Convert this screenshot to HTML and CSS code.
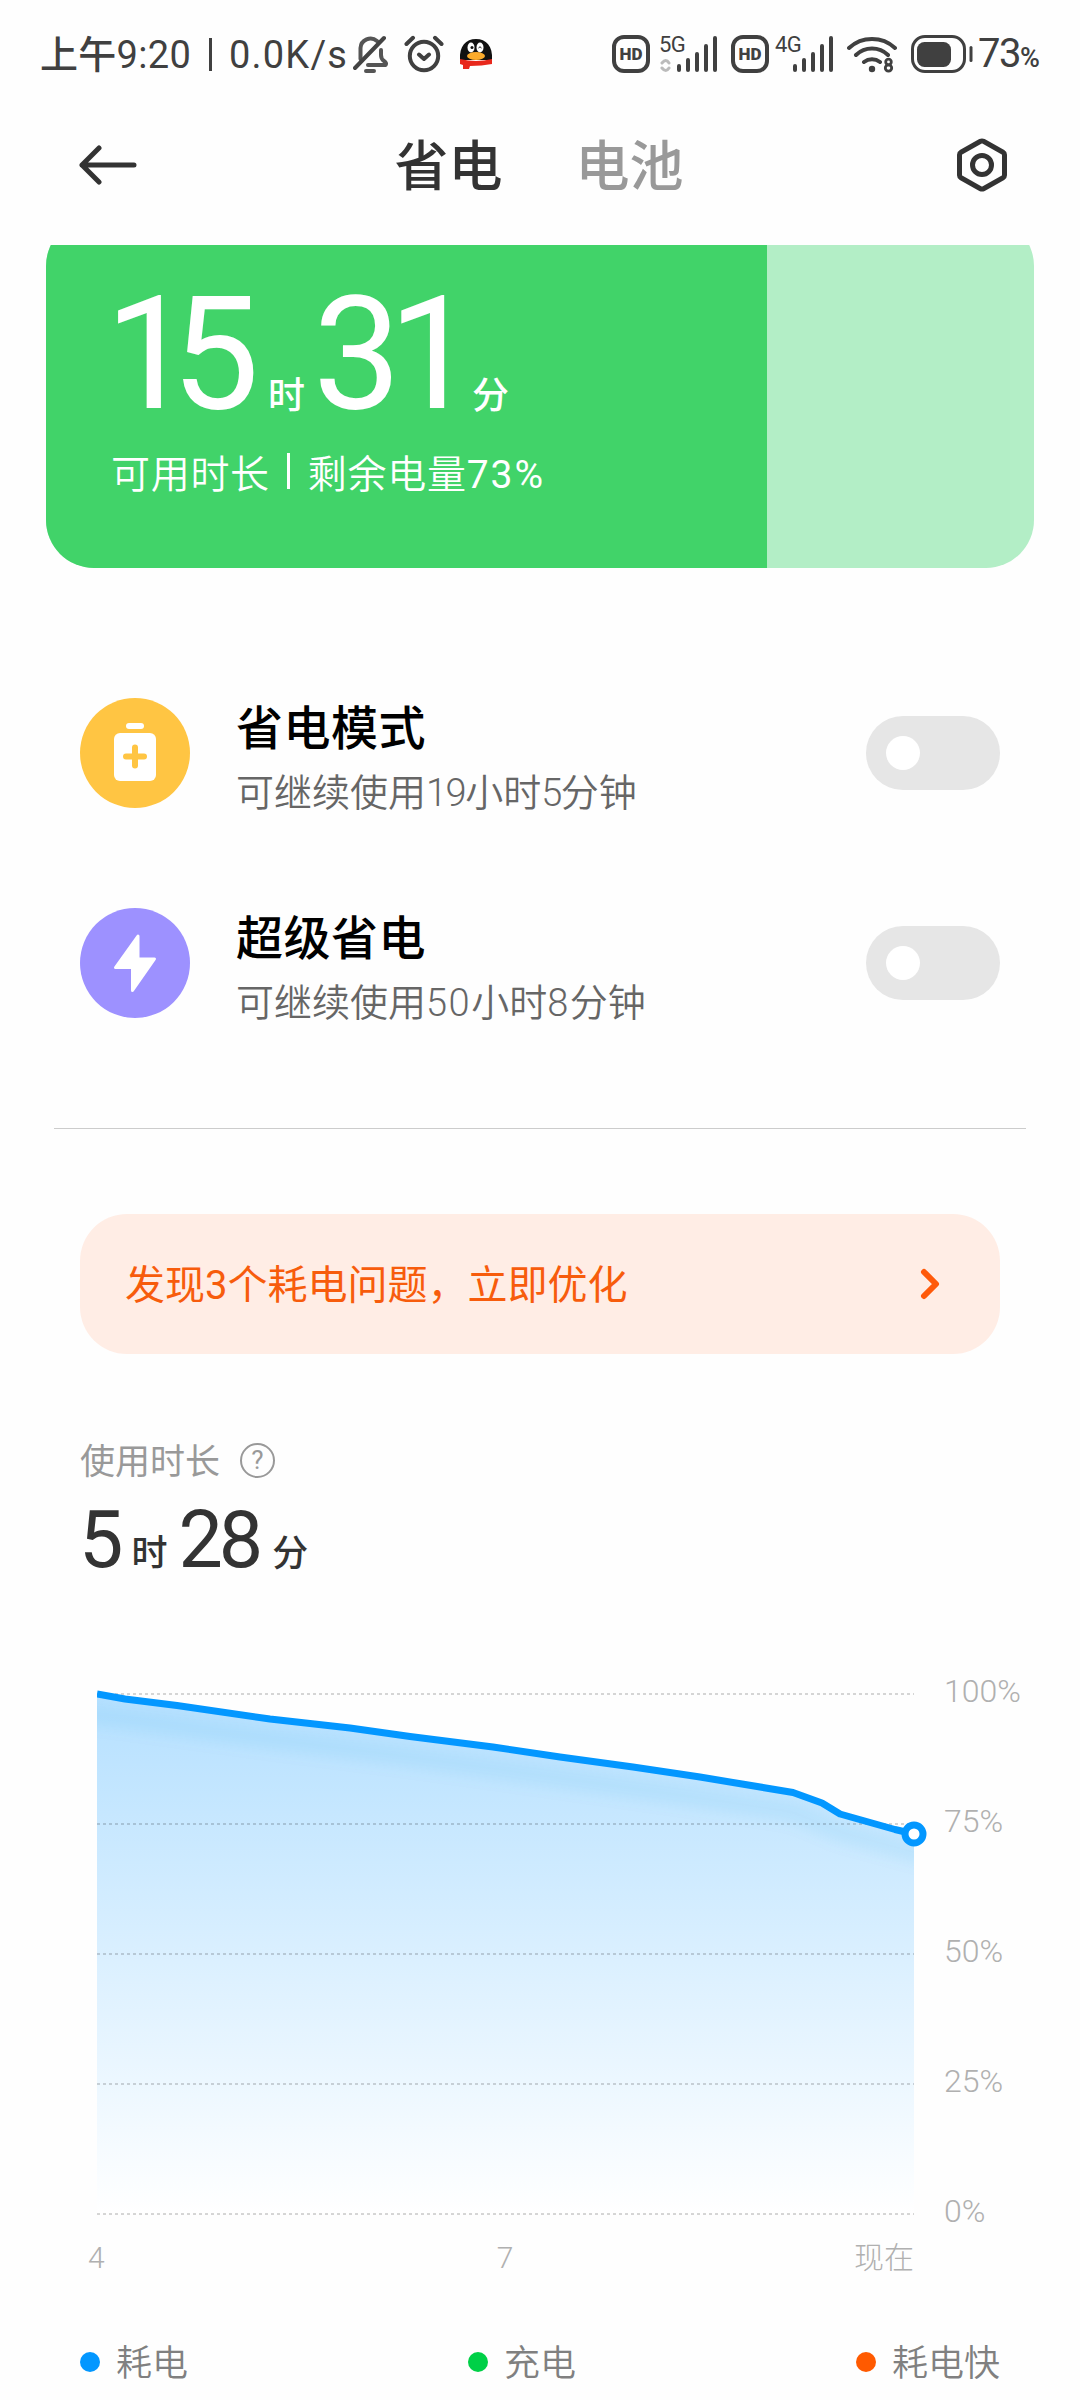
FILE: index.html
```html
<!DOCTYPE html>
<html lang="zh-CN">
<head>
<meta charset="utf-8">
<title>省电与电池</title>
<link rel="stylesheet" href="styles.css">
</head>
<body>
<div class="screen">
  <div class="status">
    <div class="status-left">
      <span class="clock">上午9:20</span><span class="sep"></span><span class="speed">0.0K/s</span>
      <svg class="ico-bell" width="36" height="38" viewBox="0 0 36 38" fill="none" stroke="#555" stroke-width="4" stroke-linecap="round" stroke-linejoin="round">
        <path d="M7.500 24V13a10 10 0 0 1 16.500-7M28 15v5q0 4 3 6t1.500 4H15M13 36h8"/><path d="M2 33 31 3" stroke="#444"/>
      </svg>
      <svg class="ico-alarm" width="40" height="38" viewBox="0 0 40 38" fill="none" stroke="#404040" stroke-width="4" stroke-linecap="round" stroke-linejoin="round">
        <circle cx="20" cy="21" r="14.2"/><path d="M2.500 9 9 2.800M37.500 9 31 2.800M15 19.500l5 4.500 5-4.500"/>
      </svg>
      <svg class="ico-qq" width="34" height="32" viewBox="0 0 34 32">
        <path d="M1 22C0 8 7 1 17 1s17 7 16 21z" fill="#111"/>
        <ellipse cx="12" cy="9.500" rx="3.500" ry="5" fill="#fff"/><ellipse cx="21" cy="9.500" rx="3.500" ry="5" fill="#fff"/>
        <circle cx="13" cy="9.500" r="1.500" fill="#111"/><path d="M19.500 10q1.500-2.500 3 0" stroke="#111" fill="none"/>
        <ellipse cx="17" cy="18" rx="9" ry="4" fill="#fbab2c"/>
        <path d="M1 21q16 4 32 0v5q-10 2-22 2l-1 3H4v-4l-3-1z" fill="#e8281c"/>
      </svg>
    </div>
    <div class="status-right">
      <div class="hd">HD</div>
      <div class="net net-a"><span>5G</span>
        <svg width="57" height="38" viewBox="0 0 57 38" fill="none" stroke="#404040" stroke-width="4" stroke-linecap="round"><path d="M2 28q4-5 7 0M2 33q4 5 7 0" stroke="#bbb" stroke-width="3"/><path d="M19 31v4M28 25v10M37 19v16M46 11v24M55 3v32"/></svg></div>
      <div class="hd">HD</div>
      <div class="net net-b"><span>4G</span>
        <svg width="57" height="38" viewBox="0 0 57 38" fill="none" stroke="#404040" stroke-width="4" stroke-linecap="round"><path d="M19 31v4M28 25v10M37 19v16M46 11v24M55 3v32"/></svg></div>
      <svg class="ico-wifi" width="50" height="38" viewBox="0 0 50 38" fill="none" stroke="#404040" stroke-width="4" stroke-linecap="round">
        <path d="M2 13a34 34 0 0 1 46 0M9 20a23 23 0 0 1 32 0M17 27a13 13 0 0 1 16 0"/><circle cx="25" cy="34" r="3.200" fill="#404040" stroke="none"/>
        <g stroke-width="2.800"><circle cx="41.500" cy="27" r="2.800"/><circle cx="41.500" cy="33" r="3.200"/></g>
      </svg>
      <svg class="ico-batt" width="62" height="38" viewBox="0 0 62 38" fill="none" stroke="#404040"><rect x="1.500" y="1.500" width="52" height="35" rx="12.500" stroke-width="3"/><rect x="6" y="7" width="34" height="25" rx="7.500" fill="#404040" stroke="none"/><path d="M60 12.500v13" stroke-width="3" stroke-linecap="round"/></svg>
      <span class="pct">73<small>%</small></span>
    </div>
  </div>

  <div class="header">
    <svg width="58" height="40" viewBox="0 0 58 40" fill="none" stroke="#333" stroke-width="5" stroke-linecap="round" stroke-linejoin="round"><path d="M20 3 3 20l17 17M3 20h52"/></svg>
    <div class="tabs"><span class="tab on">省电</span><span class="tab">电池</span></div>
    <svg width="50" height="54" viewBox="0 0 50 54" fill="none" stroke="#333" stroke-width="5" stroke-linejoin="round"><path d="M23.500 3.300q1.500-.8 3 0L46 14.200q1.500.8 1.500 2.500v20.600q0 1.700-1.500 2.500L26.500 50.700q-1.500.8-3 0L4 39.800q-1.500-.8-1.500-2.500V16.700q0-1.700 1.500-2.500z"/><circle cx="25" cy="27" r="9.500"/></svg>
  </div>

  <div class="hero-clip">
    <div class="hero">
      <div class="hero-fill">
        <div class="time"><b class="hours">15</b><i class="u1">时</i><b class="minutes">31</b><i class="u2">分</i></div>
        <div class="hero-sub"><span>可用时长</span><em></em><span>剩余电量<s>73%</s></span></div>
      </div>
    </div>
  </div>

  <div class="modes">
    <div class="mode">
      <svg width="110" height="110" viewBox="0 0 110 110"><circle cx="55" cy="55" r="55" fill="#ffc543"/><rect x="46" y="25" width="18" height="6" rx="3" fill="#fff"/><rect x="34" y="35" width="42" height="48" rx="6" fill="#fff"/><path d="M55 49.500v18M46 58.500h18" stroke="#ffc543" stroke-width="6" stroke-linecap="round"/></svg>
      <div class="mode-text"><div class="mode-title">省电模式</div><div class="mode-sub">可继续使用<s>19</s>小时<s>5</s>分钟</div></div>
      <div class="switch"></div>
    </div>
    <div class="mode">
      <svg width="110" height="110" viewBox="0 0 110 110"><circle cx="55" cy="55" r="55" fill="#9d91ff"/><path d="M58 28 35.500 59.500H52.500V82.500L74.500 51H58z" fill="#fff" stroke="#fff" stroke-width="3" stroke-linejoin="round"/></svg>
      <div class="mode-text"><div class="mode-title">超级省电</div><div class="mode-sub wide">可继续使用<s>50</s>小时<s>8</s>分钟</div></div>
      <div class="switch"></div>
    </div>
  </div>

  <div class="rule"></div>

  <div class="notice">
    <span>发现<s>3</s>个耗电问题，立即优化</span>
    <svg width="20" height="32" viewBox="0 0 20 32" fill="none" stroke="#ff5a0a" stroke-width="6" stroke-linecap="round" stroke-linejoin="round"><path d="M4 4l12 12L4 28"/></svg>
  </div>

  <div class="usage-label"><span>使用时长</span><div class="help">?</div></div>
  <div class="usage"><b>5</b><i class="u3">时</i><b>28</b><i class="u4">分</i></div>

  <div class="chart">
    <svg class="plot" width="830" height="560" viewBox="97 1680 830 560">
      <defs>
        <linearGradient id="area" x1="0" y1="1694" x2="0" y2="2214" gradientUnits="userSpaceOnUse"><stop offset="0" stop-color="#b5e0ff"/><stop offset="1" stop-color="#fff"/></linearGradient>
        <clipPath id="under"><path d="M97 1694 125 1699 177 1705.500 270 1719 350 1728 410 1736.500 493 1747 560 1757 633 1767 700 1777 793 1792.500 822 1803 840 1814 895 1829.500 914 1834V2214H97z"/></clipPath>
        <filter id="soft" x="-10%" y="-50%" width="120%" height="200%"><feGaussianBlur stdDeviation="7"/></filter>
      </defs>
      <g clip-path="url(#under)">
        <rect x="97" y="1690" width="817" height="524" fill="url(#area)"/>
        <path d="M60 1711 125 1719 270 1739 410 1757 560 1778 700 1798 793 1812 840 1832 950 1862" fill="none" stroke="#0a8fd8" stroke-opacity=".075" stroke-width="20" filter="url(#soft)"/>
      </g>
      <path d="M97 1694H914M97 1824H914M97 1954H914M97 2084H914M97 2214H914" stroke="#000" stroke-opacity=".16" stroke-width="2" stroke-dasharray="3 3"/>
      <path d="M97 1694 125 1699 177 1705.500 270 1719 350 1728 410 1736.500 493 1747 560 1757 633 1767 700 1777 793 1792.500 822 1803 840 1814 895 1829.500 914 1834" fill="none" stroke="#0397ff" stroke-width="7" stroke-linejoin="round"/>
      <circle cx="914" cy="1834" r="9" fill="#fff" stroke="#0397ff" stroke-width="7"/>
    </svg>
    <div class="yaxis"><span>100%</span><span>75%</span><span>50%</span><span>25%</span><span>0%</span></div>
  </div>
  <div class="xaxis"><span>4</span><span>7</span><span>现在</span></div>

  <div class="legend">
    <div><i class="dot blue"></i>耗电</div><div><i class="dot green"></i>充电</div><div><i class="dot orange"></i>耗电快</div>
  </div>
</div>
</body>
</html>
```
FILE: styles.css
```css
* { box-sizing: border-box; }
body { margin: 0; background: #fefefe; font-family: Roboto, "Noto Sans CJK SC", sans-serif; color: #333; }
svg { display: block; flex: none; }
i, em { font-style: normal; }
b { font-weight: 400; }
s { text-decoration: none; }
.screen { width: 1080px; height: 2400px; overflow: hidden; display: flex; flex-direction: column; white-space: nowrap; }

.status { height: 110px; padding: 35px 39px 0 40px; display: flex; justify-content: space-between; color: #404040; }
.status-left, .status-right { display: flex; height: 38px; align-items: center; }
.clock, .speed { font-size: 38px; line-height: 38px; padding-top: 2px; }
.clock { width: 151px; letter-spacing: .3px; font-weight: 450; }
.sep { width: 3px; height: 33px; background: #404040; margin: 0 17px 0 18px; }
.speed { width: 121px; letter-spacing: 1.2px; font-weight: 450; }
.ico-bell { margin-left: 3px; }
.ico-alarm { margin-left: 15px; }
.ico-qq { margin-left: 15px; }
.hd { width: 38px; height: 38px; border: 4px solid #404040; border-radius: 12px; font-size: 17px; line-height: 31px; font-weight: 900; text-align: center; }
.net { display: flex; height: 38px; position: relative; }
.net span { position: absolute; left: -1px; top: 0; font-size: 22px; line-height: 20px; letter-spacing: -.5px; }
.net-a { margin: 0 14px 0 10px; }
.net-b { margin: 0 14px 0 7px; }
.ico-batt { margin-left: 14px; }
.pct { font-size: 40px; line-height: 38px; padding-top: 4px; margin-left: 5px; width: 63px; letter-spacing: -1.5px; font-weight: 450; }
.pct small { font-size: 27px; font-weight: 500; }

.header { height: 135px; padding: 0 73px 25px 79px; display: flex; align-items: center; justify-content: space-between; }
.tabs { display: flex; gap: 73px; margin-left: -16px; padding-top: 5px; }
.tab { font-size: 54px; line-height: 60px; font-weight: 500; color: #999; }
.tab.on { color: #333; }

.hero-clip { height: 323px; overflow: hidden; padding: 0 46px; flex: none; }
.hero { margin-top: -27px; height: 350px; border-radius: 48px; overflow: hidden; background: #b3eec6; }
.hero-fill { width: 721px; height: 350px; background: #41d369; color: #fff; padding: 80px 0 0 59px; }
.time { display: flex; height: 112px; align-items: flex-end; }
.time b { font-size: 157px; line-height: 112px; height: 112px; font-weight: 450; }
.hours { width: 154px; letter-spacing: -22px; }
.minutes { width: 147px; letter-spacing: -13px; }
.time i { font-size: 37px; line-height: 37px; font-weight: 500; margin-bottom: -5px; }
.u1 { margin: 0 8px 0 9px; }
.u2 { margin-left: 12px; }
.hero-sub { display: flex; align-items: center; height: 48px; margin: 37px 0 0 6px; font-size: 39px; letter-spacing: .7px; font-weight: 350; }
.hero-sub em { width: 3px; height: 36px; background: #fff; margin: 0 18px 0 17px; }
.hero-sub s { letter-spacing: 2px; font-weight: 400; }

.modes { padding: 130px 80px 0; display: flex; flex-direction: column; gap: 100px; }
.mode { display: flex; align-items: center; height: 110px; }
.mode-text { flex: 1; margin-left: 46px; padding-top: 10px; }
.mode-title { font-size: 47px; line-height: 60px; font-weight: 500; color: #000; letter-spacing: .5px; }
.mode-sub { margin-top: 10px; font-size: 38px; line-height: 48px; color: #666; font-weight: 350; }
.mode-sub s { letter-spacing: -1.5px; font-weight: 350; }
.mode-sub.wide s { letter-spacing: 1.5px; }
.switch { width: 134px; height: 74px; border-radius: 37px; background: #e6e6e6; padding: 20px; }
.switch::before { content: ""; display: block; width: 34px; height: 34px; border-radius: 50%; background: #fff; }

.rule { height: 1px; background: #ccc; margin: 110px 54px 0 54px; flex: none; }
.notice { margin: 85px 80px 0; height: 140px; border-radius: 47px; background: #ffede5; color: #f75c0c; display: flex; align-items: center; justify-content: space-between; padding: 0 60px 0 45px; font-size: 40px; flex: none; }
.notice span { padding-bottom: 4px; }

.usage-label { margin: 81px 80px 0; height: 50px; display: flex; align-items: center; font-size: 35px; color: #999; }
.usage-label span { padding-bottom: 3px; }
.help { width: 35px; height: 35px; border: 2.500px solid #999; border-radius: 50%; margin-left: 20px; font-size: 26px; line-height: 31px; text-align: center; }
.usage { margin: 27px 79px 0; height: 56px; display: flex; align-items: flex-end; }
.usage b { font-size: 79px; line-height: 56px; letter-spacing: -4px; font-weight: 450; }
.usage i { font-size: 36px; line-height: 36px; font-weight: 500; margin-bottom: -4px; }
.u3 { margin: 0 11px 0 12px; }
.u4 { margin-left: 13px; }

.chart { margin: 112px 0 0 97px; height: 560px; display: flex; flex: none; }
.yaxis { margin-left: 17px; margin-top: -9px; display: flex; flex-direction: column; gap: 90px; color: #b0b0b0; font-size: 32px; font-weight: 300; line-height: 40px; }
.xaxis { margin: -2px 158px 0 88px; height: 40px; display: grid; grid-template-columns: 1fr auto 1fr; color: #b0b0b0; font-size: 30px; line-height: 40px; font-weight: 300; }
.xaxis span:last-child { justify-self: end; padding-right: 8px; }
.legend { margin: 61px 80px 0; display: flex; justify-content: space-between; color: #808080; font-size: 36px; line-height: 50px; font-weight: 350; }
.legend div { display: flex; align-items: center; }
.dot { width: 20px; height: 20px; border-radius: 50%; margin: 0 16px 5px 0; }
.blue { background: #0397ff; }
.green { background: #00d047; }
.orange { background: #ff5a00; }
```
